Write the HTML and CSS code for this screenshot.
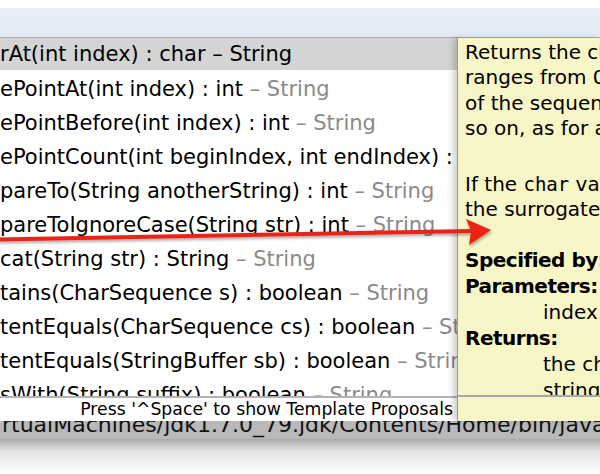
FILE: index.html
```html
<!DOCTYPE html>
<html>
<head>
<meta charset="utf-8">
<link rel="stylesheet" href="styles.css">
</head>
<body>
<div class="page">
  <div class="topwhite"></div>
  <div class="blueband"></div>
  <div class="popup">
    <div class="listcol">
      <div class="list">
        <div class="row sel">rAt(int index) : char <span class="owner">– String</span></div>
        <div class="row">ePointAt(int index) : int <span class="owner">– String</span></div>
        <div class="row">ePointBefore(int index) : int <span class="owner">– String</span></div>
        <div class="row">ePointCount(int beginIndex, int endIndex) : int <span class="owner">– String</span></div>
        <div class="row">pareTo(String anotherString) : int <span class="owner">– String</span></div>
        <div class="row">pareToIgnoreCase(String str) : int <span class="owner">– String</span></div>
        <div class="row">cat(String str) : String <span class="owner">– String</span></div>
        <div class="row">tains(CharSequence s) : boolean <span class="owner">– String</span></div>
        <div class="row">tentEquals(CharSequence cs) : boolean <span class="owner">– String</span></div>
        <div class="row">tentEquals(StringBuffer sb) : boolean <span class="owner">– String</span></div>
        <div class="row">sWith(String suffix) : boolean <span class="owner">– String</span></div>
      </div>
      <div class="status">Press '^Space' to show Template Proposals</div>
    </div>
    <div class="doc">
      <div class="doctext">
        <p class="para p1">
          <span class="ln">Returns the char value at the</span>
          <span class="ln">ranges from 0 to length() - 1.</span>
          <span class="ln">of the sequence is at index 0,</span>
          <span class="ln">so on, as for array indexing.</span>
        </p>
        <p class="para p2">
          <span class="ln">If the <code>char</code> value specified by</span>
          <span class="ln">the surrogate value is returned.</span>
        </p>
        <div class="defs">
          <span class="dl b">Specified by: charAt(...)</span>
          <span class="dl b">Parameters:</span>
          <span class="dl ind">index the index of the char</span>
          <span class="dl b">Returns:</span>
          <span class="dl ind">the char value at the index</span>
          <span class="dl ind">string.</span>
        </div>
      </div>
      <div class="docstatus"></div>
    </div>
  </div>
  <div class="console">rtualMachines/jdk1.7.0_79.jdk/Contents/Home/bin/java</div>
  <div class="shadow"></div>
  <svg class="arrow" width="600" height="474" viewBox="0 0 600 474">
    <defs>
      <filter id="ds" x="-10%" y="-50%" width="120%" height="200%">
        <feDropShadow dx="1" dy="2" stdDeviation="1.5" flood-color="#000" flood-opacity="0.35"/>
      </filter>
    </defs>
    <g filter="url(#ds)">
      <line x1="-2" y1="239.5" x2="472" y2="231" stroke="#ec2317" stroke-width="4"/>
      <polygon points="491,230 466,219 471,231 469,245" fill="#ec2317"/>
    </g>
  </svg>
</div>
</body>
</html>
```

FILE: styles.css
```css
html, body {
  margin: 0;
  padding: 0;
  background: #ffffff;
}

.page {
  position: relative;
  width: 600px;
  height: 474px;
  overflow: hidden;
  font-family: "DejaVu Sans", "Liberation Sans", sans-serif;
}

.topwhite {
  height: 8px;
  background: #ffffff;
}

.blueband {
  height: 29px;
  background: linear-gradient(#e9f0f9, #e2ebf7);
}

.popup {
  display: flex;
  height: 383px;
  border-top: 1px solid #a9a9a9;
  position: relative;
  z-index: 2;
}

.listcol {
  width: 457px;
  flex: none;
  display: flex;
  flex-direction: column;
  background: #ffffff;
}

.list {
  height: 358px;
  overflow: hidden;
}

.row {
  height: 34px;
  line-height: 34px;
  font-size: 21px;
  color: #000000;
  white-space: nowrap;
  overflow: hidden;
  padding-left: 0;
}

.row.sel {
  background: #d4d4d4;
  height: 32px;
  line-height: 33px;
  margin-bottom: 2px;
}

.owner {
  color: #8a8a8a;
}

.row.sel .owner {
  color: #000000;
}

.status {
  border-top: 2px solid #b3b3b3;
  height: 23px;
  line-height: 23px;
  font-size: 17.3px;
  text-align: right;
  padding-right: 4px;
  white-space: nowrap;
  overflow: hidden;
  background: #ffffff;
  color: #000;
}

.doc {
  flex: 1;
  display: flex;
  flex-direction: column;
  background: #f8f6c6;
  border-left: 1px solid #9a9a9a;
  box-shadow: -4px 0 6px rgba(0, 0, 0, 0.18);
  position: relative;
  z-index: 1;
  overflow: hidden;
}

.doctext {
  height: 355px;
  overflow: hidden;
  padding: 2px 0 0 7px;
  font-size: 20px;
  color: #000;
  white-space: nowrap;
}

.para {
  margin: 0;
}

.p1 {
  margin-bottom: 31px;
}

.p2 {
  margin-bottom: 24px;
}

.ln {
  display: block;
  height: 25.3px;
  line-height: 25.3px;
}

.dl {
  display: block;
  height: 26px;
  line-height: 26px;
}

code {
  font-family: "DejaVu Sans Mono", "Liberation Mono", monospace;
  font-size: 19px;
}

.b {
  font-weight: bold;
  letter-spacing: -0.5px;
}

.ind {
  padding-left: 78px;
}

.docstatus {
  border-top: 2px solid #a8a8a8;
  flex: 1;
  background: #f8f6c6;
}

.console {
  height: 18px;
  line-height: 8px;
  background: #b9b9b9;
  font-size: 22px;
  color: #111;
  white-space: nowrap;
  overflow: hidden;
  padding-left: 2px;
}

.shadow {
  height: 35px;
  background: linear-gradient(#a9a9a9, #e4e4e4 35%, #ffffff);
}

.arrow {
  position: absolute;
  left: 0;
  top: 0;
  pointer-events: none;
  z-index: 5;
}
```
